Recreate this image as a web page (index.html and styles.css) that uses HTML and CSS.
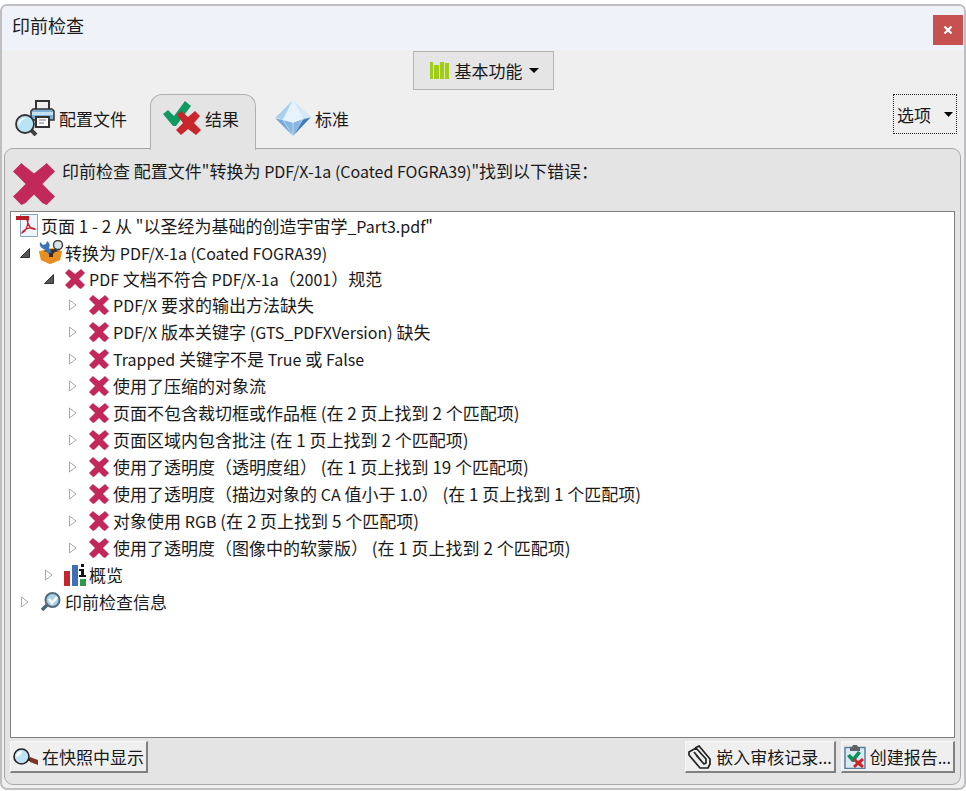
FILE: index.html
```html
<!DOCTYPE html>
<html lang="zh-CN">
<head>
  <meta charset="UTF-8">
  <title>印前检查</title>
  <link rel="stylesheet" href="styles.css">
</head>
<body>
  <svg class="defs" aria-hidden="true">
    <symbol id="cross" viewBox="0 0 20 20">
      <path d="M4 0l1 1 5 4 5-4 1-1 2 2 2 2-2 2-4 4 4 4 2 2-2 2-2 2-2-1-4-4-4 4-2 1-2-2-2-2 2-2 4-4-4-4-2-2 2-2z" fill="#c2285a"/>
    </symbol>
    <symbol id="open" viewBox="0 0 10 10">
      <path d="M9.500.500V9.500H.500z" fill="#555" stroke="#333"/>
    </symbol>
    <symbol id="closed" viewBox="0 0 10 12">
      <path d="M1.500 1l6.500 5-6.500 5z" fill="#fff" stroke="#a8a8a8"/>
    </symbol>
  </svg>

  <div class="window">
    <header class="titlebar">
      <h1>印前检查</h1>
      <button class="close" aria-label="关闭">
        <svg width="10" height="8" viewBox="0 0 10 8"><path d="M1.500.500l7 7M8.500.500l-7 7" stroke="#fff" stroke-width="2.200"/></svg>
      </button>
    </header>

    <div class="toolbar">
      <button class="library">
        <svg width="19" height="19" viewBox="0 0 19 19" fill="#a2cc1c"><path d="M0 1h3v17H0zM4 4h5v14H4zM10 1h4v17h-4zM15 2h4v16h-4z"/><path d="M9.500 1v17M14.500 1v17" stroke="#dce9a8"/></svg>
        <span>基本功能</span>
        <svg width="10" height="5" viewBox="0 0 10 5"><path d="M0 0h10L5 5z"/></svg>
      </button>
    </div>

    <div class="tabbar">
      <nav class="tabs">
        <button class="tab">
          <svg width="40" height="36" viewBox="0 0 40 36">
            <path d="M21 1h13v10H21z" fill="#eee" stroke="#333" stroke-width="2"/>
            <path d="M16 11l2-2h19l2 2v9H16z" fill="#7fb0d6" stroke="#333" stroke-width="1.500"/>
            <path d="M17 12h21v3H17z" fill="#c5e2f3"/>
            <path d="M21 17h13v10H21z" fill="#fff" stroke="#333" stroke-width="2"/>
            <path d="M24 20h7M24 23h5" stroke="#777"/>
            <path d="M16 30l5 5" stroke="#444" stroke-width="4"/>
            <circle cx="10" cy="24" r="9" fill="#b9e4f6" stroke="#333" stroke-width="1.800"/>
            <path d="M4 26a6 6 0 0 1 7-8q-6 2-7 8z" fill="#fff"/>
          </svg>
          <span>配置文件</span>
        </button>
        <button class="tab active">
          <svg width="38" height="36" viewBox="0 0 38 36">
            <path d="M0 14l5-4 6 6L22 1l6 5-15 20h-3z" fill="#0e9a62"/>
            <path d="M14 15l4-4 7 6 7-6 5 5-6 7 7 7-5 5-8-6-7 6-5-5 7-7z" fill="#c9252d"/>
          </svg>
          <span>结果</span>
        </button>
        <button class="tab">
          <svg width="36" height="36" viewBox="0 0 36 36">
            <path d="M18 0L0 18l18 3z" fill="#a9d0ee"/>
            <path d="M18 0l18 17-18 4z" fill="#d4e9f8"/>
            <path d="M0 18l18 3v15z" fill="#73a8d8"/>
            <path d="M36 17l-18 4v15z" fill="#3f79b9"/>
            <path d="M18 0L8 20l10 3 10-4z" fill="#e6f3fc"/>
            <path d="M8 20l10 3 10-4-10 16z" fill="#87b6e0"/>
            <path d="M18 0L8 20l10 16 10-17zM18 0v36M0 18l18 4 18-5" fill="none" stroke="#e9f5fd" stroke-width=".6"/>
          </svg>
          <span>标准</span>
        </button>
      </nav>
      <button class="options">
        <span>选项</span>
        <svg width="9" height="5" viewBox="0 0 9 5"><path d="M0 0h9L4.500 5z"/></svg>
      </button>
    </div>

    <main class="panel">
      <div class="summary">
        <svg width="42" height="42"><use href="#cross"/></svg>
        <p>印前检查 配置文件<span class="en">"</span>转换为 <span class="en">PDF/X-1a (Coated FOGRA39)"</span>找到以下错误<span class="colon">：</span></p>
      </div>

      <div class="results">
        <div class="row file">
          <span class="icon">
            <svg width="22" height="23" viewBox="0 0 22 23">
              <path d="M4.500.500h17v22h-17z" fill="#edf4fa" stroke="#86a7c4"/>
              <path d="M0 2h13v4H0z" fill="#b51f24"/>
              <path d="M12 6c0 7-3 12-6 13 1-3 8-7 13-4-4 1-7-4-8-9" fill="none" stroke="#c8202a" stroke-width="1.300"/>
            </svg>
          </span>
          <span>页面 1 - 2 从 <span class="en">"</span>以圣经为基础的创造宇宙学<span class="en">_Part3.pdf"</span></span>
        </div>
        <ul class="tree">
          <li>
            <div class="row">
              <button class="toggle" aria-label="折叠"><svg width="10" height="10"><use href="#open"/></svg></button>
              <span class="icon">
                <svg width="25" height="25" viewBox="0 0 25 25">
                  <path d="M0 11l13-3 10 3-2 9-10 4-9-4z" fill="#f4a63c"/>
                  <path d="M0 11l11 3 12-3-2 9-10 4-9-4z" fill="#e78f22"/>
                  <path d="M4 11l9-2 8 2-10 2z" fill="#4c2c10"/>
                  <path d="M10 13h4v4h-4z" fill="#3a2a1c"/>
                  <path d="M11 13L6 6" stroke="#3973b5" stroke-width="4"/>
                  <path d="M1 2l3 3 3-1 1-3q4 3 2 7-4 3-7 0-3-2-2-6z" fill="#3973b5"/>
                  <path d="M17 9l-4 4" stroke="#333" stroke-width="3"/>
                  <circle cx="19" cy="5" r="4.500" fill="#d9e5ea" stroke="#444" stroke-width="1.500"/>
                </svg>
              </span>
              <span>转换为 <span class="en">PDF/X-1a (Coated FOGRA39)</span></span>
            </div>
            <ul>
              <li>
                <div class="row">
                  <button class="toggle" aria-label="折叠"><svg width="10" height="10"><use href="#open"/></svg></button>
                  <span class="icon"><svg width="20" height="20"><use href="#cross"/></svg></span>
                  <span><span class="en">PDF</span> 文档不符合 <span class="en">PDF/X-1a</span>（<span class="en">2001</span>）规范</span>
                </div>
                <ul>
                  <li class="row">
                    <button class="toggle" aria-label="展开"><svg width="10" height="12"><use href="#closed"/></svg></button>
                    <span class="icon"><svg width="20" height="20"><use href="#cross"/></svg></span>
                    <span><span class="en">PDF/X</span> 要求的输出方法缺失</span>
                  </li>
                  <li class="row">
                    <button class="toggle" aria-label="展开"><svg width="10" height="12"><use href="#closed"/></svg></button>
                    <span class="icon"><svg width="20" height="20"><use href="#cross"/></svg></span>
                    <span><span class="en">PDF/X</span> 版本关键字 <span class="en">(GTS_PDFXVersion)</span> 缺失</span>
                  </li>
                  <li class="row">
                    <button class="toggle" aria-label="展开"><svg width="10" height="12"><use href="#closed"/></svg></button>
                    <span class="icon"><svg width="20" height="20"><use href="#cross"/></svg></span>
                    <span><span class="en">Trapped</span> 关键字不是 <span class="en">True</span> 或 <span class="en">False</span></span>
                  </li>
                  <li class="row">
                    <button class="toggle" aria-label="展开"><svg width="10" height="12"><use href="#closed"/></svg></button>
                    <span class="icon"><svg width="20" height="20"><use href="#cross"/></svg></span>
                    <span>使用了压缩的对象流</span>
                  </li>
                  <li class="row">
                    <button class="toggle" aria-label="展开"><svg width="10" height="12"><use href="#closed"/></svg></button>
                    <span class="icon"><svg width="20" height="20"><use href="#cross"/></svg></span>
                    <span>页面不包含裁切框或作品框 (在 2 页上找到 2 个匹配项)</span>
                  </li>
                  <li class="row">
                    <button class="toggle" aria-label="展开"><svg width="10" height="12"><use href="#closed"/></svg></button>
                    <span class="icon"><svg width="20" height="20"><use href="#cross"/></svg></span>
                    <span>页面区域内包含批注 (在 1 页上找到 2 个匹配项)</span>
                  </li>
                  <li class="row">
                    <button class="toggle" aria-label="展开"><svg width="10" height="12"><use href="#closed"/></svg></button>
                    <span class="icon"><svg width="20" height="20"><use href="#cross"/></svg></span>
                    <span>使用了透明度（透明度组） (在 1 页上找到 19 个匹配项)</span>
                  </li>
                  <li class="row">
                    <button class="toggle" aria-label="展开"><svg width="10" height="12"><use href="#closed"/></svg></button>
                    <span class="icon"><svg width="20" height="20"><use href="#cross"/></svg></span>
                    <span>使用了透明度（描边对象的 <span class="en">CA</span> 值小于 <span class="en">1.0</span>） (在 1 页上找到 1 个匹配项)</span>
                  </li>
                  <li class="row">
                    <button class="toggle" aria-label="展开"><svg width="10" height="12"><use href="#closed"/></svg></button>
                    <span class="icon"><svg width="20" height="20"><use href="#cross"/></svg></span>
                    <span>对象使用 <span class="en">RGB</span> (在 2 页上找到 5 个匹配项)</span>
                  </li>
                  <li class="row">
                    <button class="toggle" aria-label="展开"><svg width="10" height="12"><use href="#closed"/></svg></button>
                    <span class="icon"><svg width="20" height="20"><use href="#cross"/></svg></span>
                    <span>使用了透明度（图像中的软蒙版） (在 1 页上找到 2 个匹配项)</span>
                  </li>
                </ul>
              </li>
              <li class="row">
                <button class="toggle" aria-label="展开"><svg width="10" height="12"><use href="#closed"/></svg></button>
                <span class="icon">
                  <svg width="22" height="22" viewBox="0 0 22 22">
                    <path d="M0 7h6v15H0z" fill="#c1272d"/>
                    <path d="M8 1h6v21H8z" fill="#3f6fb5"/>
                    <path d="M16 15h6v7h-6z" fill="#2f9a47"/>
                    <path d="M17 0h3v3h-3zM15 5h5v6h2v2h-7v-2h2V7h-2z" fill="#111"/>
                  </svg>
                </span>
                <span>概览</span>
              </li>
            </ul>
          </li>
          <li class="row">
            <button class="toggle" aria-label="展开"><svg width="10" height="12"><use href="#closed"/></svg></button>
            <span class="icon">
              <svg width="20" height="20" viewBox="0 0 20 20">
                <path d="M1 18l5-5" stroke="#4c6675" stroke-width="3.500"/>
                <circle cx="11.500" cy="8" r="7" fill="#a9d2e4" stroke="#526c7b" stroke-width="2"/>
                <path d="M8 7l3 4 5-6" fill="none" stroke="#fff" stroke-width="2.500"/>
              </svg>
            </span>
            <span>印前检查信息</span>
          </li>
        </ul>
      </div>

      <footer class="actions">
        <button class="action snap">
          <svg width="25" height="18" viewBox="0 0 25 18">
            <path d="M15 11l3 1" stroke="#333" stroke-width="3"/>
            <path d="M17 9l8 3v5l-8-3z" fill="#7c3526"/>
            <circle cx="8.500" cy="8.500" r="7.500" fill="#bfe3f5" stroke="#222" stroke-width="1.600"/>
            <path d="M3 9q0-6 6-6-1 5-6 6z" fill="#fff"/>
          </svg>
          <span>在快照中显示</span>
        </button>
        <button class="action">
          <svg width="24" height="24" viewBox="0 0 24 24" fill="none" stroke="#222" stroke-width="1.700">
            <path d="M8 10l8 9 2-1V14L8 3 1 7v3l11 13h8l2-4v-5L11 1 7 3M6 7l9 11"/>
          </svg>
          <span>嵌入审核记录<span class="en">...</span></span>
        </button>
        <button class="action">
          <svg width="22" height="24" viewBox="0 0 22 24">
            <path d="M1 2.500h20v21H1z" fill="#dce9f3" stroke="#5b7f9f" stroke-width="1.500"/>
            <path d="M6 2h2l1-2h4l1 2h2v4H6z" fill="#5b6269"/>
            <path d="M3 11l3-2 3 3 5-6 3 2-7 9H8z" fill="#0e8f5c"/>
            <path d="M9 15l2-2 3 3 4-3 2 2-3 3 3 3-2 2-4-3-3 3-2-2 3-3z" fill="#c9252d"/>
          </svg>
          <span>创建报告<span class="en">...</span></span>
        </button>
      </footer>
    </main>
  </div>
</body>
</html>
```
FILE: styles.css
```css
*{
  box-sizing: border-box;
}
body{
  margin: 0;
  padding: 4px 0 1px;
  min-height: 100vh;
  display: flex;
  background: #fff;
  color: #1a1a1a;
  font-family: "Noto Sans CJK SC", sans-serif;
  font-size: 17px;
  line-height: 27px;
}
h1, p, ul{
  margin: 0;
  padding: 0;
}
ul{
  list-style: none;
}
button{
  margin: 0;
  padding: 0;
  border: none;
  background: none;
  color: inherit;
  font: inherit;
  white-space: nowrap;
  display: flex;
  align-items: center;
  cursor: pointer;
}
svg{
  display: block;
  flex: none;
}
.defs{
  position: absolute;
  width: 0;
  height: 0;
}
.en{
  font-size: 16px;
}
.colon{
  font-family: "Noto Sans CJK TC", sans-serif;
}
.window{
  flex: 1;
  display: flex;
  flex-direction: column;
  border: 2px solid #bfbfc2;
  border-radius: 7px;
  background: #efefef;
  overflow: hidden;
}
.titlebar{
  display: flex;
  align-items: flex-start;
  justify-content: space-between;
  height: 44px;
  padding: 6px 1px 0 10px;
  background: #eff2f9;
}
.titlebar h1{
  font-size: 18px;
  font-weight: normal;
}
.close{
  width: 30px;
  height: 30px;
  margin-top: 3px;
  justify-content: center;
  background: #c75050;
}
.toolbar{
  display: flex;
  justify-content: center;
  padding: 1px 0 4px;
}
.library{
  height: 39px;
  padding: 0 14px 0 16px;
  gap: 6px;
  border: 1px solid #b4b4b4;
  background: #e5e5e5;
}
.tabbar{
  display: flex;
  justify-content: space-between;
  align-items: flex-start;
  padding: 0 7px 0 3px;
}
.tabs{
  display: flex;
}
.tab{
  height: 56px;
  padding: 0 13px 9px 9px;
  gap: 4px;
  border: 1px solid transparent;
  border-bottom: none;
}
.tab.active{
  position: relative;
  margin: 0 9px;
  padding: 0 16px 9px 12px;
  border-color: #b0b0b0;
  border-radius: 12px 12px 0 0;
  background: #e4e4e4;
}
.options{
  width: 64px;
  height: 40px;
  padding: 0 3px;
  justify-content: space-between;
  border: 1px dotted #222;
}
.panel{
  flex: 1;
  display: flex;
  flex-direction: column;
  margin: -2px 3px 3px 2px;
  padding: 0 5px 11px;
  border: 1px solid #a8a8a8;
  border-radius: 9px;
  background: #e4e4e4;
}
.summary{
  display: flex;
  gap: 7px;
  height: 62px;
  padding: 8px 3px 0;
}
.summary svg{
  margin-top: 6px;
}
.results{
  flex: 1;
  border: 1px solid #808080;
  background: #fff;
}
.row{
  display: flex;
  align-items: center;
  height: 27px;
  padding-left: 9px;
  white-space: nowrap;
}
.row.file{
  padding-left: 3px;
}
.tree ul{
  margin-top: -1px;
  padding-left: 24px;
}
.toggle{
  width: 18px;
  height: 18px;
}
.icon{
  display: flex;
  justify-content: center;
  width: 26px;
  margin-right: 1px;
}
.actions{
  display: flex;
  gap: 5px;
  padding-top: 3px;
}
.action{
  height: 32px;
  padding: 0 2px;
  gap: 4px;
  border: 1px solid #f8f8f8;
  border-right: 2px solid #808080;
  border-bottom: 2px solid #808080;
  background: #efefef;
}
.snap{
  margin-right: auto;
}
```
